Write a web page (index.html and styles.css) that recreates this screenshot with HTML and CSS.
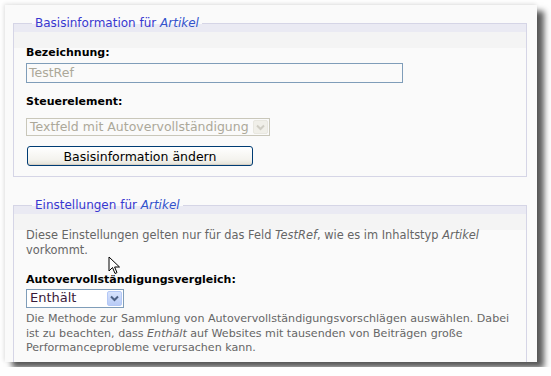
FILE: index.html
```html
<!DOCTYPE html>
<html lang="de">
<head>
  <meta charset="UTF-8">
  <title>Feldeinstellungen</title>
  <link rel="stylesheet" href="styles.css">
</head>
<body>
  <div class="window">
    <fieldset class="box box-basic">
      <legend>Basisinformation für <em>Artikel</em></legend>

      <label class="field-label">Bezeichnung:</label>
      <div class="textbox disabled">TestRef</div>

      <label class="field-label second">Steuerelement:</label>
      <div class="dropdown disabled wide">
        <span class="dropdown-text">Textfeld mit Autovervollständigung</span>
        <span class="dropdown-arrow">
          <svg width="9" height="7" viewBox="0 0 9 7"><path d="M1 1.5 L4.5 5 L8 1.5" fill="none" stroke="#cfcdc4" stroke-width="2"/></svg>
        </span>
      </div>

      <button class="btn" type="button">Basisinformation ändern</button>
    </fieldset>

    <fieldset class="box box-settings">
      <legend>Einstellungen für <em>Artikel</em></legend>

      <p class="desc">Diese Einstellungen gelten nur für das Feld <em>TestRef</em>, wie es im Inhaltstyp <em>Artikel</em> vorkommt.</p>

      <label class="field-label third">Autovervollständigungsvergleich:</label>
      <div class="dropdown narrow">
        <span class="dropdown-text">Enthält</span>
        <span class="dropdown-arrow">
          <svg width="9" height="7" viewBox="0 0 9 7"><path d="M1 1.5 L4.5 5 L8 1.5" fill="none" stroke="#4d6185" stroke-width="2"/></svg>
        </span>
      </div>
      <p class="desc help">Die Methode zur Sammlung von Autovervollständigungsvorschlägen auswählen. Dabei ist zu beachten, dass <em>Enthält</em> auf Websites mit tausenden von Beiträgen große Performanceprobleme verursachen kann.</p>
    </fieldset>

    <svg class="cursor" width="14" height="20" viewBox="0 0 14 20">
      <path d="M1 1 L1 15 L4.5 11.5 L7 17.5 L9 16.6 L6.6 11 L11.5 11 Z" fill="#fff" stroke="#000" stroke-width="1"/>
    </svg>
  </div>
</body>
</html>
```

FILE: styles.css
```css
html, body {
  margin: 0;
  padding: 0;
  background: #fefefe;
}
body {
  font-family: "DejaVu Sans", Verdana, sans-serif;
  padding: 5px;
}
.window {
  position: relative;
  width: 514px;
  height: 357px;
  padding: 0 10px 0 8px;
  background: #fafafa;
  overflow: hidden;
  box-shadow: 7px 6px 6px rgba(0,0,0,0.65), -1px -1px 4px rgba(0,0,0,0.12);
}
.box {
  margin: 0;
  border: 1px solid #d5d5e6;
  padding: 0 16px 0 12px;
  background: linear-gradient(#eaeaf3 0, #eaeaf3 8px, #f4f4f4 8px, #f4f4f4 24px, #fafafa 24px);
}
.box-basic {
  margin-top: 11px;
  height: 159px;
}
.box-settings {
  margin-top: 21px;
  height: 200px;
}
legend {
  margin-left: 6px;
  padding: 0 3px;
  font-size: 12px;
  color: #3838d0;
}
legend em {
  color: #3353cc;
}
.field-label {
  display: block;
  margin-top: 16px;
  font-size: 11px;
  font-weight: bold;
  line-height: 14px;
  color: #000;
}
.field-label.second {
  margin-top: 12px;
}
.field-label.third {
  margin-top: 15px;
}
.textbox {
  box-sizing: border-box;
  width: 377px;
  height: 20px;
  margin-top: 3px;
  padding: 1px 2px;
  border: 1px solid #7f9db9;
  background: #fafafa;
  font-size: 12.5px;
  line-height: 16px;
  color: #aca899;
}
.dropdown {
  box-sizing: border-box;
  display: flex;
  align-items: stretch;
  height: 18px;
  border: 1px solid #7f9db9;
  background: #fff;
  font-size: 12.5px;
}
.dropdown.wide {
  width: 244px;
  margin-top: 9px;
}
.dropdown.narrow {
  width: 98px;
  height: 19px;
  margin-top: 2px;
  font-size: 13px;
}
.dropdown.disabled {
  border-color: #c9c7ba;
  background: #fafafa;
  color: #aca899;
}
.dropdown-text {
  flex: 1;
  padding: 0 3px;
  line-height: 16px;
  white-space: nowrap;
  overflow: hidden;
  color: #3a1a3a;
}
.disabled .dropdown-text {
  color: #aca899;
}
.dropdown-arrow {
  width: 15px;
  margin: 1px;
  display: flex;
  align-items: center;
  justify-content: center;
  border-radius: 2px;
  background: linear-gradient(#d7e3fd, #b8cbf6);
  border: 1px solid #b4c8f6;
  box-sizing: border-box;
}
.disabled .dropdown-arrow {
  background: #f0efe9;
  border-color: #e8e7e0;
}
.btn {
  display: block;
  box-sizing: border-box;
  width: 226px;
  height: 20px;
  margin-top: 10px;
  margin-left: 1px;
  padding: 0;
  border: 1px solid #003c74;
  border-radius: 3px;
  background: linear-gradient(#ffffff, #f4f3ee 70%, #e3e1d7);
  box-shadow: inset 0 -1px 0 #d6d0c5;
  font-family: "DejaVu Sans", Verdana, sans-serif;
  font-size: 12.5px;
  color: #000;
}
.desc {
  margin: 16px 0 0;
  font-size: 11.4px;
  line-height: 15px;
  color: #666;
}
.help {
  margin-top: 4px;
  font-size: 11.1px;
  line-height: 14.5px;
}
.cursor {
  position: absolute;
  left: 103px;
  top: 251px;
}
```
